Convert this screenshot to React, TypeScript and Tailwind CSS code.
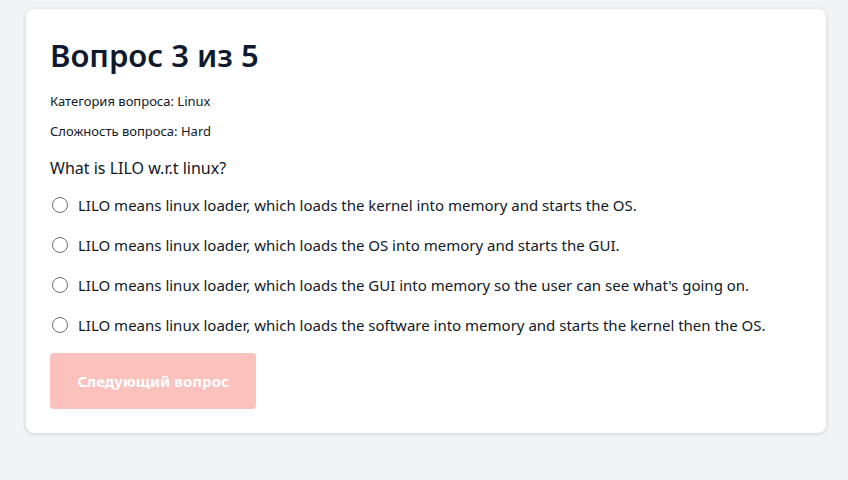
import React from 'react';

const answers = [
  'LILO means linux loader, which loads the kernel into memory and starts the OS.',
  'LILO means linux loader, which loads the OS into memory and starts the GUI.',
  "LILO means linux loader, which loads the GUI into memory so the user can see what's going on.",
  'LILO means linux loader, which loads the software into memory and starts the kernel then the OS.',
];

export default function App() {
  return (
    <div
      className="min-h-[480px] bg-[#f2f3f5] px-[26px] pt-[9px] text-[#111827]"
      style={{ fontFamily: '"Noto Sans", "Open Sans", sans-serif' }}
    >
      <div className="w-[800px] rounded-lg bg-white p-6 shadow-[0_1px_4px_rgba(0,0,0,0.15)]">
        <h1 className="text-[31px] font-semibold leading-[44px] text-[#0f1a2e]">Вопрос 3 из 5</h1>
        <p className="mt-[15px] text-[13px] leading-[18px]">Категория вопроса: Linux</p>
        <p className="mt-[12px] text-[13px] leading-[18px]">Сложность вопроса: Hard</p>
        <p className="mt-[17px] text-[16px] leading-[22px]">What is LILO w.r.t linux?</p>
        <div className="mt-[6px] flex flex-col">
          {answers.map((a) => (
            <label key={a} className="flex h-10 items-center gap-[10px] text-[15px]">
              <span className="ml-[2px] h-4 w-4 rounded-full border border-[#6b7280] bg-white" />
              <span>{a}</span>
            </label>
          ))}
        </div>
        <button className="mt-[8px] h-14 w-[206px] rounded-[4px] bg-[#fbc1bd] text-[15px] font-bold text-white">
          Следующий вопрос
        </button>
      </div>
    </div>
  );
}
